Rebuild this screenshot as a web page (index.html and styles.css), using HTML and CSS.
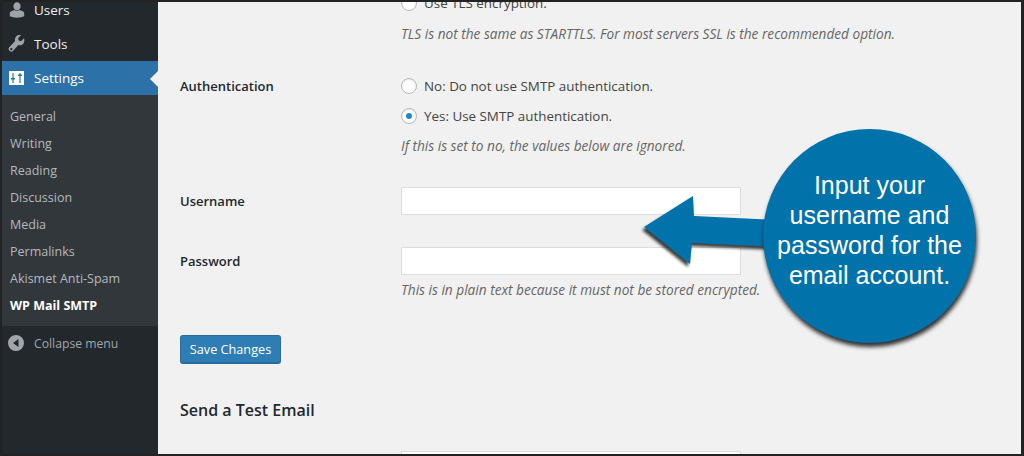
FILE: index.html
```html
<!DOCTYPE html>
<html lang="en">
<head>
  <meta charset="UTF-8">
  <title>WP Mail SMTP</title>
  <link rel="stylesheet" href="styles.css">
</head>
<body>
  <div class="frame">
    <nav class="sidebar">
      <a class="menu-item menu-users">
        <svg class="menu-icon" viewBox="0 0 20 20"><path d="M10 1.500c2.400 0 4 1.900 4 4.400 0 2.300-1.400 4.600-4 4.600S6 8.200 6 5.900c0-2.500 1.600-4.400 4-4.400zM2 17v-3.300c0-1.300.8-2 2.200-2.500l3.300-1.100c.7.700 1.500 1.100 2.500 1.100s1.800-.4 2.500-1.100l3.300 1.100c1.400.5 2.200 1.200 2.200 2.500V17c-2 1-4.800 1.500-8 1.500s-6-.5-8-1.500z"/></svg>
        Users
      </a>
      <a class="menu-item">
        <svg class="menu-icon" viewBox="0 0 20 20"><path d="M17.800 3.700l-3.400 3.200-2.500-.7-.7-2.500 3.300-3.300c-1.900-.6-4-.2-5.400 1.200-1.400 1.400-1.800 3.400-1.200 5.200L1.400 13.700c-1 1-1 2.500 0 3.500l.6.600c1 1 2.500 1 3.500 0l6-6.700c1.800.6 3.800.2 5.200-1.200 1.400-1.400 1.800-4.300 1.100-6.200zM3.700 16.900c-.6 0-1.200-.5-1.200-1.200s.6-1.200 1.200-1.200 1.200.5 1.200 1.200-.6 1.200-1.200 1.200z"/></svg>
        Tools
      </a>
      <a class="menu-item menu-current">
        <svg class="menu-icon" viewBox="0 0 15 14"><path fill-rule="evenodd" d="M0 0h15v14H0zM3.400 2v5H2v1.400h1.400V12h1.200V8.400H6V7H4.600V2zM10.400 2v1.600H9V5h1.400v7h1.200V5H13V3.600h-1.400V2z"/></svg>
        Settings
      </a>
      <ul class="submenu">
        <li>General</li>
        <li>Writing</li>
        <li>Reading</li>
        <li>Discussion</li>
        <li>Media</li>
        <li>Permalinks</li>
        <li>Akismet Anti-Spam</li>
        <li class="submenu-current">WP Mail SMTP</li>
      </ul>
      <a class="collapse">
        <svg class="collapse-icon" viewBox="0 0 16 16"><path fill-rule="evenodd" d="M8 0a8 8 0 1 1 0 16A8 8 0 0 1 8 0zm2.500 4L5 8l5.500 4z"/></svg>
        Collapse menu
      </a>
    </nav>

    <main class="content">
      <div class="field-row row-encryption">
        <div></div>
        <div>
          <label class="radio-line"><span class="radio"></span>Use TLS encryption.</label>
          <p class="note note-tls">TLS is not the same as STARTTLS. For most servers SSL is the recommended option.</p>
        </div>
      </div>

      <div class="field-row row-auth">
        <div class="field-label">Authentication</div>
        <div>
          <label class="radio-line"><span class="radio"></span>No: Do not use SMTP authentication.</label>
          <label class="radio-line"><span class="radio radio-on"></span>Yes: Use SMTP authentication.</label>
          <p class="note">If this is set to no, the values below are ignored.</p>
        </div>
      </div>

      <div class="field-row row-user">
        <div class="field-label">Username</div>
        <div class="text-input"></div>
      </div>

      <div class="field-row row-pass">
        <div class="field-label">Password</div>
        <div>
          <div class="text-input"></div>
          <p class="note">This is in plain text because it must not be stored encrypted.</p>
        </div>
      </div>

      <button class="save-btn">Save Changes</button>

      <h2>Send a Test Email</h2>

      <div class="field-row">
        <div></div>
        <div class="text-input"></div>
      </div>
    </main>

    <div class="callout">
      <svg class="callout-arrow" viewBox="0 0 150 80">
        <path d="M136 26 L50 22 L49 2 L0 33 L46 70 L48 49 L136 53 Z"/>
      </svg>
      <div class="callout-circle">Input your<br>username and<br>password for the<br>email account.</div>
    </div>
  </div>
</body>
</html>
```

FILE: styles.css
```css
* {
  box-sizing: border-box;
}

html, body {
  margin: 0;
  height: 100%;
}

body {
  font-family: "Open Sans", "Noto Sans", sans-serif;
  font-size: 13.4px;
  color: #444;
}

.frame {
  position: relative;
  display: flex;
  width: 1024px;
  height: 456px;
  overflow: hidden;
  background-color: #f1f1f1;
  border: 2px solid #222;
  border-right-width: 3px;
}

.sidebar {
  width: 156px;
  flex-shrink: 0;
  background-color: #23282d;
  color: #eee;
}

.menu-item {
  display: flex;
  align-items: center;
  height: 34px;
  padding-left: 6px;
  font-size: 13.5px;
  line-height: 32px;
}

.menu-users {
  margin-top: -9px;
}

.menu-icon {
  width: 18px;
  height: 18px;
  margin-right: 8px;
  fill: #9ea3a8;
}

.menu-current {
  position: relative;
  background-color: #2c72a8;
  color: #fff;
}

.menu-current .menu-icon {
  width: 15px;
  height: 14px;
  margin: 0 10px 0 1px;
  fill: #fff;
}

.menu-current::after {
  content: "";
  position: absolute;
  right: 0;
  top: 10px;
  border: 8px solid transparent;
  border-left: 0;
  border-right-color: #f1f1f1;
}

.submenu {
  list-style: none;
  margin: 0;
  padding: 8px 0 7px 8px;
  font-size: 12.5px;
  background-color: #32373c;
  color: #b4b9be;
}

.submenu li {
  height: 27px;
  line-height: 27px;
}

.submenu .submenu-current {
  color: #fff;
  font-weight: 700;
}

.collapse {
  display: flex;
  align-items: center;
  height: 34px;
  padding-left: 6px;
  font-size: 12.2px;
  color: #a0a5aa;
}

.collapse-icon {
  width: 16px;
  height: 16px;
  margin-right: 10px;
  fill: #a0a5aa;
}

.content {
  flex: 1;
  padding: 0 0 0 22px;
}

.field-row {
  display: grid;
  grid-template-columns: 221px 340px;
}

.row-encryption {
  margin-top: -14px;
}

.row-auth {
  margin-top: 27px;
}

.row-user {
  margin-top: 31px;
  align-items: center;
}

.row-pass {
  margin-top: 32px;
}

.field-label {
  font-size: 13px;
  font-weight: 600;
  color: #23282d;
  line-height: 28px;
}

.row-auth .field-label {
  line-height: 30px;
}

.radio-line {
  display: flex;
  align-items: center;
  height: 30px;
}

.radio {
  width: 16px;
  height: 16px;
  margin-right: 7px;
  border: 1px solid #b4b9be;
  border-radius: 50%;
  background-color: #fff;
  box-shadow: inset 0 1px 2px rgba(0,0,0,0.1);
}

.radio-on {
  position: relative;
}

.radio-on::after {
  content: "";
  position: absolute;
  left: 4px;
  top: 4px;
  width: 6px;
  height: 6px;
  border-radius: 50%;
  background-color: #1e8cbe;
}

.note {
  margin: 5px 0 0;
  font-size: 13.65px;
  font-style: italic;
  white-space: nowrap;
  color: #666;
  line-height: 20px;
}

.note-tls {
  margin-top: 6px;
}

.text-input {
  height: 28px;
  background-color: #fff;
  border: 1px solid #ddd;
}

.save-btn {
  display: block;
  width: 101px;
  height: 29px;
  margin-top: 35px;
  padding: 0;
  font: inherit;
  font-size: 12.7px;
  color: #fff;
  background-color: #2e7db5;
  border: 1px solid #2a6c9c;
  border-bottom-width: 2px;
  border-radius: 3px;
}

h2 {
  margin: 34px 0 29px;
  font-size: 16px;
  font-weight: 600;
  line-height: 24px;
  color: #23282d;
}

/* the annotation sits on top of the page */
.callout {
  position: absolute;
  left: 642px;
  top: 127px;
  width: 332px;
  height: 218px;
}

.callout-arrow {
  position: absolute;
  left: 0;
  top: 65px;
  width: 150px;
  height: 80px;
  fill: #0272aa;
  filter: drop-shadow(-2px 3px 1.5px rgba(0,0,0,0.75));
}

.callout-circle {
  position: absolute;
  right: 0;
  top: 0;
  width: 213px;
  height: 214px;
  display: flex;
  align-items: center;
  justify-content: center;
  padding-bottom: 12px;
  text-align: center;
  font-family: "Liberation Sans", Arial, sans-serif;
  font-size: 25px;
  line-height: 30px;
  color: #fff;
  background-color: #0272aa;
  border-radius: 50%;
  box-shadow: 1px 4px 4px rgba(0,0,0,0.8);
}
```
